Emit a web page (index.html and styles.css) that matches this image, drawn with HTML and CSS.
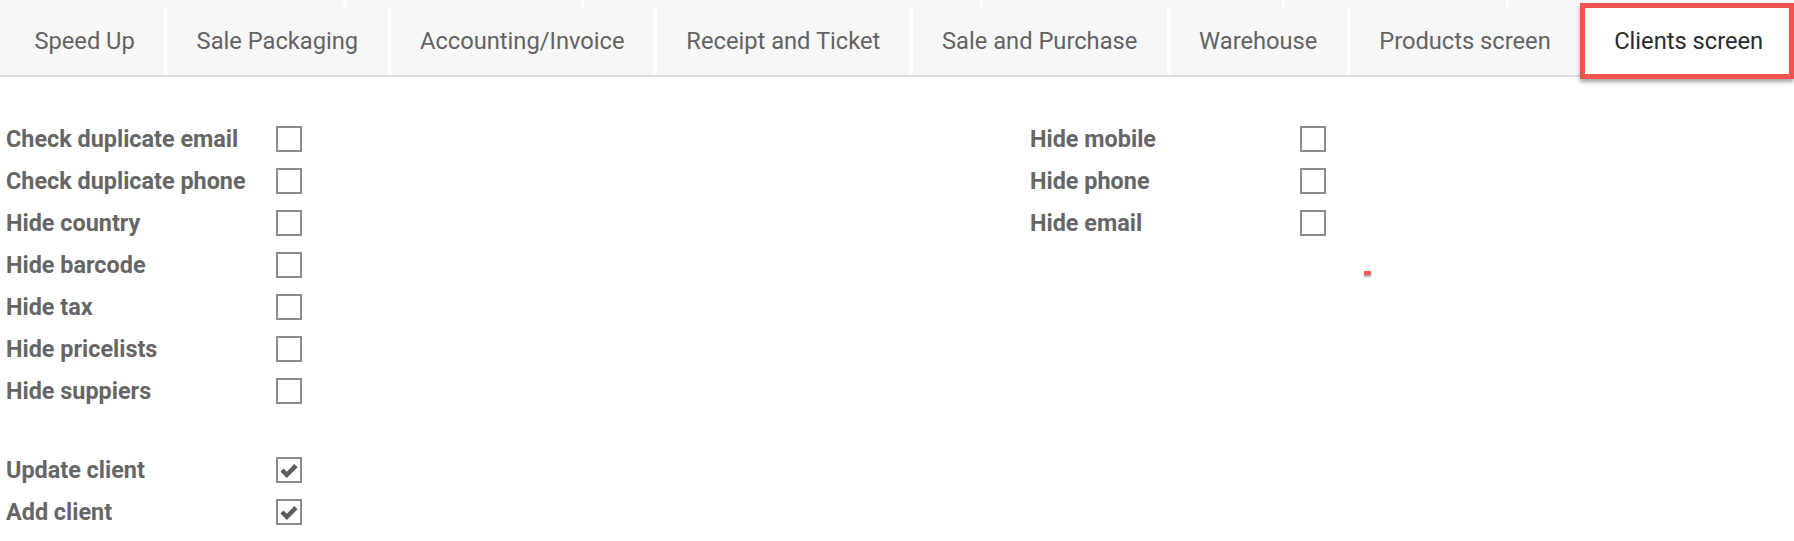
FILE: index.html
```html
<!DOCTYPE html>
<html>
<head>
<meta charset="utf-8">
<link rel="stylesheet" href="styles.css">
</head>
<body>
<div class="topbar">
  <div class="strip">
    <span class="seg" style="width:343px"></span>
    <span class="seg" style="width:235px"></span>
    <span class="seg" style="width:396px"></span>
    <span class="seg" style="width:299px"></span>
    <span class="seg" style="width:221px"></span>
    <span class="seg seg-last"></span>
  </div>
  <nav class="tabs">
    <div class="tab">Speed Up</div>
    <div class="tab">Sale Packaging</div>
    <div class="tab">Accounting/Invoice</div>
    <div class="tab">Receipt and Ticket</div>
    <div class="tab">Sale and Purchase</div>
    <div class="tab">Warehouse</div>
    <div class="tab">Products screen</div>
    <div class="tab active">Clients screen</div>
  </nav>
</div>
<main class="content">
  <section class="group">
    <div class="row"><span class="label">Check duplicate email</span><span class="box"></span></div>
    <div class="row"><span class="label">Check duplicate phone</span><span class="box"></span></div>
    <div class="row"><span class="label">Hide country</span><span class="box"></span></div>
    <div class="row"><span class="label">Hide barcode</span><span class="box"></span></div>
    <div class="row"><span class="label">Hide tax</span><span class="box"></span></div>
    <div class="row"><span class="label">Hide pricelists</span><span class="box"></span></div>
    <div class="row"><span class="label">Hide suppiers</span><span class="box"></span></div>
    <div class="spacer"></div>
    <div class="row"><span class="label">Update client</span><span class="box"><svg viewBox="0 0 22 22" width="22" height="22"><path d="M4 11 L8.8 15.8 L18 6.6" fill="none" stroke="#5c5c5c" stroke-width="4.4" stroke-linejoin="miter"/></svg></span></div>
    <div class="row"><span class="label">Add client</span><span class="box"><svg viewBox="0 0 22 22" width="22" height="22"><path d="M4 11 L8.8 15.8 L18 6.6" fill="none" stroke="#5c5c5c" stroke-width="4.4" stroke-linejoin="miter"/></svg></span></div>
  </section>
  <section class="group right">
    <div class="row"><span class="label">Hide mobile</span><span class="box"></span></div>
    <div class="row"><span class="label">Hide phone</span><span class="box"></span></div>
    <div class="row"><span class="label">Hide email</span><span class="box"></span></div>
    <span class="dot"></span>
  </section>
</main>
</body>
</html>
```
FILE: styles.css
```css
html, body {
  margin: 0;
  padding: 0;
  background: #ffffff;
  font-family: Roboto, "Liberation Sans", sans-serif;
}
.topbar {
  background: #f7f7f7;
  border-bottom: 2px solid #dcdcdc;
  padding-left: 5px;
}
.strip {
  display: flex;
  height: 7px;
  gap: 3px;
  background: #ffffff;
  margin-left: -5px;
}
.seg {
  background: #f7f7f7;
  height: 7px;
  flex-shrink: 0;
}
.seg-last { flex: 1; }
.tabs {
  display: flex;
  gap: 3px;
  background: #ffffff;
  height: 68px;
}
.tab {
  background: #f7f7f7;
  color: #636363;
  font-size: 23.7px;
  padding: 0 29.4px;
  display: flex;
  align-items: center;
  white-space: nowrap;
  flex-shrink: 0;
}
.tab.active {
  position: relative;
  background: #ffffff;
  color: #2b2b2b;
  padding: 0 28px 0 31px;
}
.tab.active::after {
  content: "";
  position: absolute;
  left: -3px;
  top: -4px;
  right: -3px;
  bottom: -4px;
  border: 5px solid #f0544f;
  box-shadow: 0 3px 4px rgba(0,0,0,0.35);
}
.content {
  display: grid;
  grid-template-columns: 1024px 1fr;
  padding: 41px 0 0 6px;
}
.group {
  display: flex;
  flex-direction: column;
  position: relative;
}
.row {
  display: flex;
  align-items: center;
  height: 42px;
}
.label {
  width: 270px;
  font-weight: 700;
  font-size: 23.4px;
  color: #666666;
  white-space: nowrap;
}
.box {
  width: 22px;
  height: 22px;
  border: 2px solid #8c8c8c;
  display: flex;
  align-items: center;
  justify-content: center;
}
.spacer { height: 37px; }
.dot {
  position: absolute;
  left: 334px;
  top: 153px;
  width: 7px;
  height: 4px;
  background: #f35a55;
  box-shadow: 0 2px 2px rgba(0,0,0,0.35);
}
```
